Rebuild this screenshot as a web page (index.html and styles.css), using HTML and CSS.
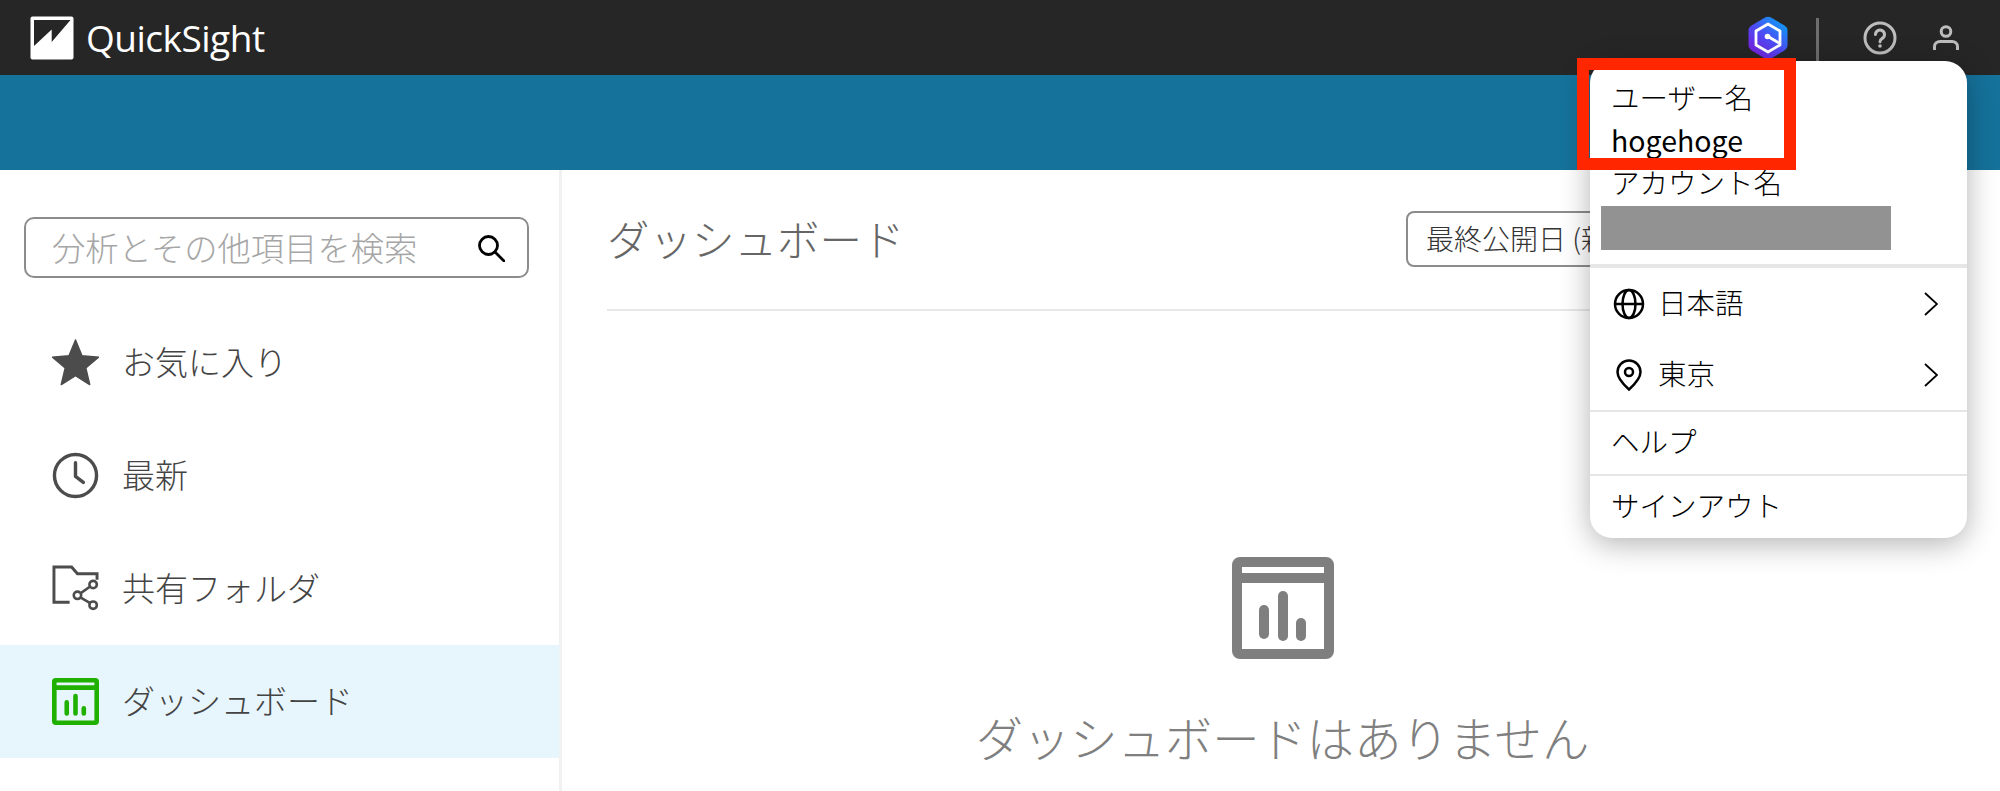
FILE: index.html
```html
<!DOCTYPE html>
<html lang="ja">
<head>
    <meta charset="UTF-8">
    <meta name="viewport" content="width=device-width, initial-scale=1.0">
    <title>QuickSight</title>
    <link rel="stylesheet" href="styles.css">
</head>
<body>
    <header class="topbar">
        <div class="brand">
            <svg class="brand-logo" viewBox="0 0 44 44">
                <rect x="0.5" y="0.5" width="43" height="43" rx="2" fill="#fff"/>
                <path d="M4 4H40.500L21.700 26V13.500L4 30Z" fill="#262626"/>
            </svg>
            <span class="brand-name">QuickSight</span>
        </div>
        <div class="topbar-right">
            <svg class="hex-icon" viewBox="0 0 40 44">
                <defs>
                    <linearGradient id="hexGrad" x1="0.15" y1="0.95" x2="0.85" y2="0.05">
                        <stop offset="0" stop-color="#7a1cdc"/>
                        <stop offset="0.5" stop-color="#4d4cf5"/>
                        <stop offset="1" stop-color="#0a9ff5"/>
                    </linearGradient>
                </defs>
                <path d="M17 1.500a6 6 0 0 1 6 0L36.500 9.500a6 6 0 0 1 3 5V29.500a6 6 0 0 1-3 5L23 42.500a6 6 0 0 1-6 0L3.500 34.500a6 6 0 0 1-3-5V14.500a6 6 0 0 1 3-5Z" fill="url(#hexGrad)"/>
                <path d="M20 8L32 15V29L20 36L8 29V15Z" fill="none" stroke="#fff" stroke-width="2.800" stroke-linejoin="round"/>
                <path d="M20 20.500L31 27" stroke="#fff" stroke-width="2.800"/>
                <circle cx="19.500" cy="20.500" r="2.800" fill="#fff"/>
            </svg>
            <div class="topbar-sep"></div>
            <svg class="help-icon" viewBox="0 0 34 34" fill="none" stroke="#bdbdbd" stroke-width="3">
                <circle cx="17" cy="17" r="15"/>
                <path d="M12.500 13.500a4.500 4.500 0 1 1 6.800 3.900c-1.500.9-2.300 1.700-2.300 3.300" stroke-linecap="round"/>
                <circle cx="17" cy="25" r="1.800" fill="#bdbdbd" stroke="none"/>
            </svg>
            <svg class="user-icon" viewBox="0 0 26 26" fill="none" stroke="#bdbdbd" stroke-width="3">
                <circle cx="13" cy="6.500" r="4.800"/>
                <path d="M1.500 25v-3.500c0-3 2.500-5 5.500-5h12c3 0 5.500 2 5.500 5V25"/>
            </svg>
        </div>
    </header>
    <div class="bluebar"></div>

    <div class="layout">
        <aside class="sidebar">
            <div class="search-box">
                <span class="search-placeholder">分析とその他項目を検索</span>
                <svg class="search-icon" viewBox="0 0 28 28" fill="none" stroke="#000" stroke-width="2.800">
                    <circle cx="11.500" cy="11.500" r="9"/>
                    <path d="M18 18L27 27" stroke-linecap="round"/>
                </svg>
            </div>
            <nav class="nav-list">
                <div class="nav-item">
                    <svg class="nav-icon" viewBox="0 0 48 48">
                        <path d="M24 1L30.500 17L47.500 18.500L34.500 29.500L38.500 46.500L24 37.500L9.500 46.500L13.500 29.500L0.500 18.500L17.500 17Z" fill="#4c4c4c" stroke="#4c4c4c" stroke-width="1.500" stroke-linejoin="round"/>
                    </svg>
                    <span>お気に入り</span>
                </div>
                <div class="nav-item">
                    <svg class="nav-icon" viewBox="0 0 48 48" fill="none" stroke="#4c4c4c">
                        <circle cx="24" cy="24" r="21.500" stroke-width="3.500"/>
                        <path d="M24 11V25L32 31" stroke-width="3.500" stroke-linecap="round" stroke-linejoin="round"/>
                    </svg>
                    <span>最新</span>
                </div>
                <div class="nav-item">
                    <svg class="nav-icon" viewBox="0 0 48 48" fill="none" stroke="#4c4c4c" stroke-width="2.600">
                        <path d="M18 38H2V2H20L26 9H46V15" stroke-width="3"/>
                        <circle cx="42" cy="20" r="3.800"/>
                        <circle cx="26" cy="31" r="3.800"/>
                        <circle cx="42" cy="41" r="3.800"/>
                        <path d="M29 29L39 22M29 33L39 39"/>
                    </svg>
                    <span>共有フォルダ</span>
                </div>
                <div class="nav-item active">
                    <svg class="nav-icon" viewBox="0 0 102 102">
                        <path fill-rule="evenodd" d="M8 0H94a8 8 0 0 1 8 8V94a8 8 0 0 1-8 8H8a8 8 0 0 1-8-8V8a8 8 0 0 1 8-8ZM10 10V16H92V10ZM10 26V92H92V26Z" fill="#1fb000"/>
                        <rect x="27" y="48" width="10" height="34" rx="5" fill="#1fb000"/>
                        <rect x="46" y="34" width="10" height="48" rx="5" fill="#1fb000"/>
                        <rect x="64" y="61" width="10" height="21" rx="5" fill="#1fb000"/>
                    </svg>
                    <span>ダッシュボード</span>
                </div>
            </nav>
        </aside>

        <main class="content">
            <div class="content-head">
                <h1 class="content-title">ダッシュボード</h1>
                <div class="sort-select">最終公開日 (新しい順)</div>
            </div>
            <div class="empty-state">
                <svg class="empty-icon" viewBox="0 0 102 102">
                    <path fill-rule="evenodd" d="M8 0H94a8 8 0 0 1 8 8V94a8 8 0 0 1-8 8H8a8 8 0 0 1-8-8V8a8 8 0 0 1 8-8ZM10 10V16H92V10ZM10 26V92H92V26Z" fill="#7f7f7f"/>
                    <rect x="27" y="48" width="10" height="34" rx="5" fill="#7f7f7f"/>
                    <rect x="46" y="34" width="10" height="50" rx="5" fill="#7f7f7f"/>
                    <rect x="64" y="61" width="10" height="23" rx="5" fill="#7f7f7f"/>
                </svg>
                <p class="empty-text">ダッシュボードはありません</p>
            </div>
        </main>
    </div>

    <!-- user menu, opened over the page -->
    <div class="user-menu">
        <div class="menu-info">
            <div class="menu-label">ユーザー名</div>
            <div class="menu-value">hogehoge</div>
            <div class="menu-label account-label">アカウント名</div>
            <div class="masked"></div>
        </div>
        <div class="menu-row lang-row">
            <svg class="row-icon" viewBox="0 0 32 32" fill="none" stroke="#000" stroke-width="2.500">
                <circle cx="16" cy="16" r="14"/>
                <ellipse cx="16" cy="16" rx="6.500" ry="14"/>
                <path d="M2 16H30"/>
            </svg>
            <span class="row-text">日本語</span>
            <svg class="chevron" viewBox="0 0 14 24" fill="none" stroke="#000" stroke-width="1.800"><path d="M1 1L13 12L1 23"/></svg>
        </div>
        <div class="menu-row region-row">
            <svg class="row-icon" viewBox="0 0 32 32" fill="none" stroke="#000" stroke-width="2.500">
                <path d="M16 30.500C11 26 4.500 20 4.500 13a11.500 11.500 0 0 1 23 0C27.500 20 21 26 16 30.500Z"/>
                <circle cx="16" cy="13" r="4"/>
            </svg>
            <span class="row-text">東京</span>
            <svg class="chevron" viewBox="0 0 14 24" fill="none" stroke="#000" stroke-width="1.800"><path d="M1 1L13 12L1 23"/></svg>
        </div>
        <div class="menu-link help-link">ヘルプ</div>
        <div class="menu-link signout-link">サインアウト</div>
    </div>
    <div class="red-mark"></div>
</body>
</html>
```

FILE: styles.css
```css
html, body {
    height: 100%;
}
body {
    margin: 0;
    overflow: hidden;
    background: white;
    font-family: "Noto Sans CJK JP", "Noto Sans", sans-serif;
    font-weight: 300;
    color: #444;
}
.topbar {
    height: 75px;
    background: #262626;
    display: flex;
    align-items: center;
    justify-content: space-between;
    padding: 0 41px 0 30px;
}
.brand {
    display: flex;
    align-items: center;
    gap: 12px;
}
.brand-logo {
    width: 44px;
    height: 44px;
}
.brand-name {
    font-family: "Open Sans", sans-serif;
    font-weight: 400;
    font-size: 37px;
    letter-spacing: -0.500px;
    color: white;
}
.topbar-right {
    display: flex;
    align-items: center;
}
.hex-icon {
    width: 40px;
    height: 44px;
    margin-right: 28px;
}
.topbar-sep {
    width: 3px;
    height: 57px;
    margin-top: 18px;
    background: #6e6e6e;
    margin-right: 44px;
}
.help-icon {
    width: 34px;
    height: 34px;
    margin-right: 36px;
}
.user-icon {
    width: 26px;
    height: 26px;
}
.bluebar {
    height: 95px;
    background: #15729b;
}
.layout {
    display: flex;
    height: 621px;
}
.sidebar {
    flex: none;
    width: 562px;
    border-right: 3px solid #f0f1f2;
    padding-top: 47px;
    box-sizing: border-box;
}
.search-box {
    width: 505px;
    height: 61px;
    margin-left: 24px;
    box-sizing: border-box;
    border: 2.500px solid #8c8c8c;
    border-radius: 10px;
    display: flex;
    align-items: center;
    justify-content: space-between;
    padding: 0 22px 0 26px;
}
.search-placeholder {
    font-size: 33.300px;
    line-height: 50px;
    margin-top: -2px;
    color: #a6a6a6;
}
.search-icon {
    width: 28px;
    height: 28px;
}
.nav-list {
    margin-top: 28px;
}
.nav-item {
    height: 113px;
    display: flex;
    align-items: center;
    gap: 23px;
    padding-left: 52px;
    font-size: 33px;
    color: #444;
}
.nav-item span {
    margin-top: -4px;
}
.nav-item.active {
    background: #e7f5fc;
}
.nav-icon {
    width: 47px;
    height: 47px;
    flex: none;
}
.content {
    flex: 1;
    padding: 0 40px 0 45px;
    min-width: 0;
}
.content-head {
    height: 141px;
    border-bottom: 2px solid #e8e8e8;
    display: flex;
    align-items: center;
    justify-content: space-between;
    box-sizing: border-box;
}
.content-title {
    margin: -4px 0 0;
    font-size: 42.500px;
    font-weight: 300;
    color: #666;
}
.sort-select {
    width: 554px;
    height: 56px;
    margin-top: -1px;
    box-sizing: border-box;
    border: 2px solid #8c8c8c;
    border-radius: 8px;
    padding-left: 18px;
    font-size: 28px;
    line-height: 50px;
    color: #333;
    white-space: nowrap;
    overflow: hidden;
}
.empty-state {
    display: flex;
    flex-direction: column;
    align-items: center;
    padding-top: 246px;
    margin-left: -2px;
}
.empty-icon {
    width: 102px;
    height: 102px;
}
.empty-text {
    margin: 46px 0 0;
    font-size: 47.300px;
    line-height: 64px;
    color: #7f7f7f;
}

.user-menu {
    position: absolute;
    left: 1590px;
    top: 61px;
    width: 377px;
    height: 477px;
    background: white;
    border-radius: 22px;
    box-shadow: 0 6px 30px rgba(0,0,0,0.3);
    color: #000;
    font-size: 28.500px;
    overflow: hidden;
}
.menu-info {
    height: 187px;
    border-bottom: 4px solid #e6e6e6;
    padding: 16px 0 0 21px;
}
.menu-label {
    line-height: 40px;
}
.menu-value {
    font-weight: 400;
    line-height: 40px;
    margin-top: 3px;
}
.account-label {
    margin-top: 2px;
}
.masked {
    width: 290px;
    height: 44px;
    margin: 4px 0 0 -10px;
    background: #929292;
}
.menu-row {
    height: 71px;
    display: flex;
    align-items: center;
    padding: 0 29px 0 23px;
}
.row-icon {
    width: 32px;
    height: 32px;
    flex: none;
}
.row-text {
    flex: 1;
    margin-left: 13px;
    margin-top: -4px;
}
.chevron {
    width: 14px;
    height: 24px;
}
.region-row {
    border-bottom: 2px solid #e6e6e6;
}
.menu-link {
    height: 64px;
    line-height: 58px;
    padding-left: 21px;
    box-sizing: border-box;
}
.help-link {
    border-bottom: 2px solid #e6e6e6;
}
.red-mark {
    position: absolute;
    left: 1577px;
    top: 58px;
    width: 219px;
    height: 112px;
    box-sizing: border-box;
    border: 12px solid #ff2600;
}
```
